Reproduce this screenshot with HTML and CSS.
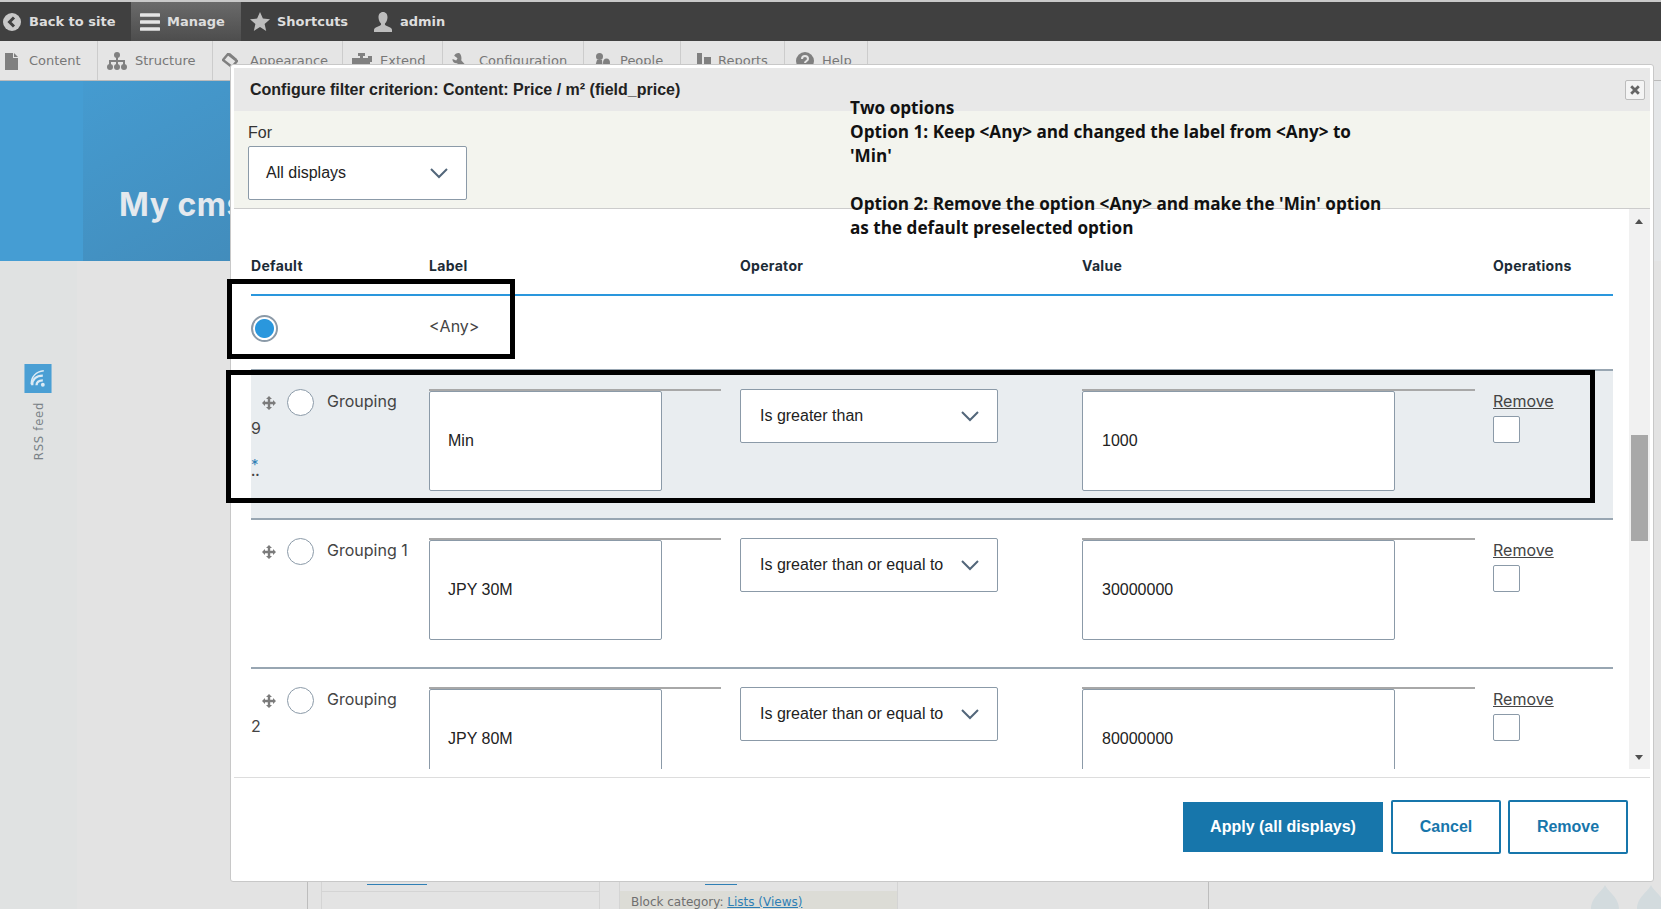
FILE: index.html
```
<!DOCTYPE html>
<html>

<head>
  <title>Configure filter criterion</title>
  <link rel="stylesheet" href="styles.css">
</head>

<body>

  <div class="toolbar">
    <a class="bar-item back-item">
      <svg class="bar-icon" viewBox="0 0 18 18"><circle cx="9" cy="9" r="9" fill="#c8c8c8"/><path d="M11 4.500 6.500 9l4.500 4.500" fill="none" stroke="#404040" stroke-width="3"/></svg>
      Back to site
    </a>
    <a class="bar-item manage-item">
      <svg class="bar-icon manage-icon" viewBox="0 0 20 20"><path d="M1 3h18M1 10h18M1 17h18" stroke="#e4e4e4" stroke-width="3.400" stroke-linecap="round"/></svg>
      Manage
    </a>
    <a class="bar-item shortcut-item">
      <svg class="bar-icon star-icon" viewBox="0 0 20 20"><path d="M10 0l2.900 6.600 7.100.7-5.400 4.700 1.600 7L10 15l-6.200 4 1.600-7L0 7.300l7.100-.7z" fill="#bdbdbd"/></svg>
      Shortcuts
    </a>
    <a class="bar-item admin-item">
      <svg class="bar-icon" viewBox="0 0 18 20"><path d="M9 0c3 0 4.500 2.300 4.500 5.200 0 2.600-1.100 4.800-2.300 6.100-.6.700-.3 1.700.6 2.100l4.400 2c1 .5 1.800 1.600 1.800 2.600v2H0v-2c0-1 .8-2.100 1.800-2.600l4.400-2c.9-.4 1.200-1.400.6-2.100C5.600 10 4.500 7.800 4.500 5.200 4.500 2.300 6 0 9 0z" fill="#bdbdbd"/></svg>
      admin
    </a>
  </div>

  <div class="tray">
    <a class="tray-item tray-content">
      <svg class="tray-icon" width="13" height="17" viewBox="0 0 13 17"><path d="M0 0h8v5h5v12H0zM9 0l4 4H9z" fill="#808080"/></svg>
      Content
    </a>
    <a class="tray-item tray-structure">
      <svg class="tray-icon" width="20" height="18" viewBox="0 0 20 18"><circle cx="10" cy="3" r="3" fill="#808080"/><circle cx="3" cy="15" r="3" fill="#808080"/><circle cx="10" cy="15" r="3" fill="#808080"/><circle cx="17" cy="15" r="3" fill="#808080"/><path d="M10 3v12M3 15v-6h14v6" fill="none" stroke="#808080" stroke-width="2"/></svg>
      Structure
    </a>
    <a class="tray-item tray-appearance">
      <svg class="tray-icon" width="16" height="17" viewBox="0 0 16 17"><path d="M6 1l9 7-5 6-9-7z" fill="none" stroke="#808080" stroke-width="2.400"/><path d="M5 1l9 7 1-2-7-6z" fill="#808080"/></svg>
      Appearance
    </a>
    <a class="tray-item tray-extend">
      <svg class="tray-icon" width="20" height="17" viewBox="0 0 20 17"><path d="M6 0h7v3h-2v2h5V3h4v6h-2v8H0V5h8V3H6z" fill="#808080"/></svg>
      Extend
    </a>
    <a class="tray-item tray-config">
      <svg class="tray-icon" width="17" height="17" viewBox="0 0 17 17"><path d="M6.500 0c-2 0-3.800 1.200-4.300 2.800l3.300 2.400-1.300 2.300L.6 5.900C0 8.300 2 10.500 5 10.200l7 6.300c1 .9 3.800-1.200 3-2.700L9.200 7.300c.8-3-.4-7.300-2.700-7.300z" fill="#808080"/></svg>
      Configuration
    </a>
    <a class="tray-item tray-people">
      <svg class="tray-icon" width="17" height="17" viewBox="0 0 17 17"><circle cx="6.500" cy="3.500" r="3.500" fill="#808080"/><path d="M4 7h5l1 10H1z" fill="#808080"/><ellipse cx="13.500" cy="10" rx="3.500" ry="4.500" fill="#808080"/></svg>
      People
    </a>
    <a class="tray-item tray-reports">
      <svg class="tray-icon" width="21" height="17" viewBox="0 0 21 17"><path d="M0 12h5v5H0zM7 0h5v17H7zM14 4h7v13h-7z" fill="#808080"/></svg>
      Reports
    </a>
    <a class="tray-item tray-help">
      <svg class="tray-icon" width="18" height="18" viewBox="0 0 18 18"><circle cx="9" cy="9" r="9" fill="#808080"/><path d="M6 7c0-4 6-4 6 0 0 2-3 2-3 4" fill="none" stroke="#e5e5e5" stroke-width="2"/><circle cx="9" cy="14" r="1.300" fill="#e5e5e5"/></svg>
      Help
    </a>
  </div>

  <div class="hero">
    <div class="hero-side"></div>
    <div class="hero-main">My cms</div>
    <div class="hero-tail"></div>
  </div>

  <div class="lower">
    <div class="side-strip">
      <svg class="rss-icon" viewBox="0 0 28 30"><rect width="28" height="30" fill="#4a9fd4"/><path d="M8 22c0-6 4-10 11-10M12.500 22c0-3 2-5 6.500-5" fill="none" stroke="#dcebf5" stroke-width="2.400"/><path d="M7 21c0-8 5-13 13-14" fill="none" stroke="#dcebf5" stroke-width="1.600"/><circle cx="19" cy="21.500" r="2" fill="#dcebf5"/></svg>
      <div class="rss-label">RSS feed</div>
    </div>
    <div class="lower-main">
      <div class="block-col block-left">
        <div class="peek-link peek-left"></div>
      </div>
      <div class="block-col block-right">
        <div class="peek-link peek-right"></div>
        <div class="block-meta">Block category: <a class="meta-link">Lists (Views)</a></div>
      </div>
    </div>
    <div class="lower-side">
      <svg class="drops" viewBox="0 0 70 24"><path d="M14 0c3 7 14 12 14 24H0C0 12 11 7 14 0zM60 0c3 7 14 12 14 24H46c0-12 11-17 14-24z" fill="#d3dbde"/></svg>
    </div>
  </div>

  <div class="dialog">
    <div class="dialog-title">
      <span>Configure filter criterion: Content: Price / m² (field_price)</span>
      <button class="btn-close">
        <svg width="10" height="10" viewBox="0 0 10 10"><path d="M1.200 1.200l7.600 7.600M8.800 1.200L1.200 8.800" stroke="#666" stroke-width="2.800"/></svg>
      </button>
    </div>

    <div class="filter-bar">
      <label class="for-label">For</label>
      <div class="select select-for">
        All displays
        <svg class="chevron" viewBox="0 0 18 11"><path d="M1 1l8 8 8-8" fill="none" stroke="#52667a" stroke-width="2"/></svg>
      </div>
    </div>

    <div class="dialog-body">
      <div class="table-area">
        <div class="grid-row head-row">
          <div>Default</div>
          <div>Label</div>
          <div class="head-op">Operator</div>
          <div>Value</div>
          <div>Operations</div>
        </div>

        <div class="grid-row any-row">
          <div><span class="radio radio-on"></span></div>
          <div class="any-label">&lt;Any&gt;</div>
        </div>

        <div class="grid-row item-row row-active">
          <div class="default-cell">
            <div class="drag-line">
              <svg class="move-icon" viewBox="0 0 14 14"><path d="M7 0l3 3H8.200v2.800H11V4l3 3-3 3V8.200H8.200V11H10l-3 3-3-3h1.800V8.200H3V10L0 7l3-3v1.800h2.800V3H4z" fill="#7b7b7b"/></svg>
              <span class="radio"></span>
              <span class="group-name">Grouping</span>
            </div>
            <div class="group-num">9</div>
            <div class="changed-mark">*</div>
            <div class="changed-dots">..</div>
          </div>
          <div class="field-cell"><div class="input label-input">Min</div></div>
          <div class="op-cell">
            <div class="select select-op">Is greater than
              <svg class="chevron" viewBox="0 0 18 11"><path d="M1 1l8 8 8-8" fill="none" stroke="#52667a" stroke-width="2"/></svg>
            </div>
          </div>
          <div class="field-cell value-cell"><div class="input value-input">1000</div></div>
          <div class="ops-cell"><a class="remove-link">Remove</a><span class="check"></span></div>
        </div>

        <div class="grid-row item-row">
          <div class="default-cell">
            <div class="drag-line">
              <svg class="move-icon" viewBox="0 0 14 14"><path d="M7 0l3 3H8.200v2.800H11V4l3 3-3 3V8.200H8.200V11H10l-3 3-3-3h1.800V8.200H3V10L0 7l3-3v1.800h2.800V3H4z" fill="#7b7b7b"/></svg>
              <span class="radio"></span>
              <span class="group-name">Grouping 1</span>
            </div>
          </div>
          <div class="field-cell"><div class="input label-input">JPY 30M</div></div>
          <div class="op-cell">
            <div class="select select-op">Is greater than or equal to
              <svg class="chevron" viewBox="0 0 18 11"><path d="M1 1l8 8 8-8" fill="none" stroke="#52667a" stroke-width="2"/></svg>
            </div>
          </div>
          <div class="field-cell value-cell"><div class="input value-input">30000000</div></div>
          <div class="ops-cell"><a class="remove-link">Remove</a><span class="check"></span></div>
        </div>

        <div class="grid-row item-row">
          <div class="default-cell">
            <div class="drag-line">
              <svg class="move-icon" viewBox="0 0 14 14"><path d="M7 0l3 3H8.200v2.800H11V4l3 3-3 3V8.200H8.200V11H10l-3 3-3-3h1.800V8.200H3V10L0 7l3-3v1.800h2.800V3H4z" fill="#7b7b7b"/></svg>
              <span class="radio"></span>
              <span class="group-name">Grouping</span>
            </div>
            <div class="group-num">2</div>
          </div>
          <div class="field-cell"><div class="input label-input">JPY 80M</div></div>
          <div class="op-cell">
            <div class="select select-op">Is greater than or equal to
              <svg class="chevron" viewBox="0 0 18 11"><path d="M1 1l8 8 8-8" fill="none" stroke="#52667a" stroke-width="2"/></svg>
            </div>
          </div>
          <div class="field-cell value-cell"><div class="input value-input">80000000</div></div>
          <div class="ops-cell"><a class="remove-link">Remove</a><span class="check"></span></div>
        </div>
      </div>

      <div class="scrollbar">
        <span class="arrow-up"></span>
        <span class="thumb"></span>
        <span class="arrow-down"></span>
      </div>
    </div>

    <div class="dialog-foot">
      <button class="btn btn-apply">Apply (all displays)</button>
      <button class="btn btn-cancel">Cancel</button>
      <button class="btn btn-remove">Remove</button>
    </div>

    <!-- annotation painted over the screenshot -->
    <div class="note">
      <p>Two options</p>
      <p>Option 1: Keep &lt;Any&gt; and changed the label from &lt;Any&gt; to</p>
      <p>'Min'</p>
      <p>&nbsp;</p>
      <p>Option 2: Remove the option &lt;Any&gt; and make the 'Min' option</p>
      <p>as the default preselected option</p>
    </div>
    <div class="mark mark-any"></div>
    <div class="mark mark-row"></div>
  </div>

</body>

</html>
```

FILE: styles.css
```
html, body {
  margin: 0;
  height: 909px;
  overflow: hidden;
}

body {
  position: relative;
  background-color: #e3e3e3;
  font-family: "Liberation Sans", Arial, sans-serif;
  font-size: 16px;
  color: #222;
}

/* top black bar */
.toolbar {
  display: flex;
  height: 39px;
  margin-top: 2px;
  background-color: #404040;
  box-shadow: 0 -2px 0 #c9c9c9;
  font-family: "DejaVu Sans", Verdana, sans-serif;
  font-size: 13px;
  font-weight: bold;
  color: #ddd;
}

.bar-item {
  display: flex;
  align-items: center;
  gap: 8px;
}

.bar-icon {
  width: 18px;
  height: 20px;
  flex: none;
}

.back-item {
  width: 131px;
  padding-left: 3px;
  box-sizing: border-box;
}

.manage-item {
  width: 110px;
  padding-left: 9px;
  box-sizing: border-box;
  background: linear-gradient(to bottom, #6a6a6a, #4d4d4d);
  gap: 7px;
}

.manage-icon {
  width: 20px;
}

.shortcut-item {
  padding-left: 9px;
  width: 133px;
  box-sizing: border-box;
  gap: 7px;
}

.star-icon {
  width: 20px;
}

/* second row */
.tray {
  display: flex;
  height: 39px;
  background-color: #e5e5e5;
  border-bottom: 1px solid #bbb;
  font-family: "DejaVu Sans", Verdana, sans-serif;
  font-size: 13px;
  color: #777;
}

.tray-item {
  display: flex;
  align-items: center;
  gap: 9px;
  box-sizing: border-box;
  border-right: 1px solid #ccc;
  padding-left: 9px;
}

.tray-icon {
  margin-top: 1px;
}

.tray-content { width: 98px; padding-left: 5px; gap: 11px; }
.tray-structure { width: 115px; gap: 8px; }
.tray-appearance { width: 130px; gap: 12px; }
.tray-extend { width: 100px; gap: 8px; }
.tray-config { width: 141px; gap: 10px; }
.tray-people { width: 97px; gap: 10px; }
.tray-reports { width: 104px; gap: 7px; }
.tray-help { width: 83px; gap: 8px; padding-left: 11px; }

.hero {
  display: flex;
  height: 180px;
}

.hero-side {
  width: 83px;
  background-color: #459dd3;
}

.hero-main {
  flex: 1;
  padding: 104px 0 0 36px;
  box-sizing: border-box;
  background: linear-gradient(150deg, #459bd0, #3f7ea8 50%, #4590be);
  font-family: Inter, sans-serif;
  font-size: 32px;
  line-height: 40px;
  font-weight: 700;
  letter-spacing: 0.5px;
  color: #e4e9ee;
}

.hero-tail {
  width: 60px;
  background-color: #e4e6e8;
}

.lower {
  display: flex;
  height: 648px;
}

.side-strip {
  display: flex;
  flex-direction: column;
  align-items: center;
  width: 77px;
  padding-top: 103px;
  box-sizing: border-box;
  background-color: #e0e2e2;
}

.rss-icon {
  display: block;
  width: 28px;
  height: 29px;
  margin-left: -1px;
}

.rss-label {
  margin-top: 9px;
  writing-mode: vertical-rl;
  transform: rotate(180deg);
  font-family: "DejaVu Sans", sans-serif;
  font-size: 11.5px;
  letter-spacing: 0.8px;
  color: #7b8288;
}

.lower-main {
  display: flex;
  gap: 19px;
  width: 902px;
  margin-left: 230px;
  padding: 0 0 0 13px;
  box-sizing: border-box;
  border-left: 1px solid #bdbdbd;
  border-right: 1px solid #bdbdbd;
}

.block-col {
  position: relative;
  width: 279px;
  height: 648px;
  box-sizing: border-box;
  border-right: 1px solid #d4d4d4;
  border-left: 1px solid #d4d4d4;
}

.block-left::after {
  content: "";
  position: absolute;
  top: 630px;
  left: 0;
  right: 0;
  border-top: 1px solid #d4d4d4;
}

.peek-link {
  position: absolute;
  top: 623px;
  height: 1px;
  background-color: #2f7fb5;
}

.peek-left { left: 45px; width: 60px; }
.peek-right { left: 85px; width: 32px; }

.block-meta {
  position: absolute;
  top: 630px;
  left: 0;
  right: 0;
  height: 18px;
  padding-left: 11px;
  background-color: #dcdcd6;
  font-family: "DejaVu Sans", sans-serif;
  font-size: 12px;
  line-height: 22px;
  color: #6f6f6f;
}

.meta-link {
  color: #2f7fb5;
  text-decoration: underline;
}

.lower-side {
  flex: 1;
  position: relative;
}

.drops {
  position: absolute;
  top: 624px;
  right: 0;
  width: 70px;
  height: 24px;
}

/* modal */
.dialog {
  position: absolute;
  top: 64px;
  left: 230px;
  width: 1424px;
  height: 818px;
  padding: 3px;
  box-sizing: border-box;
  display: flex;
  flex-direction: column;
  background-color: #fff;
  border: 1px solid #c8c8c8;
  border-radius: 3px;
}

.dialog-title {
  display: flex;
  justify-content: space-between;
  align-items: center;
  height: 43px;
  flex: none;
  padding: 0 5px 0 16px;
  box-sizing: border-box;
  background-color: #e8e8e8;
  font-weight: bold;
  font-size: 16px;
  color: #222;
}

.btn-close {
  display: flex;
  align-items: center;
  justify-content: center;
  width: 20px;
  height: 20px;
  padding: 0;
  background-color: #f4f4f4;
  border: 1px solid #bcbcbc;
  border-radius: 2px;
}

.filter-bar {
  height: 98px;
  flex: none;
  padding: 13px 0 0 14px;
  box-sizing: border-box;
  background-color: #f3f4ee;
  border-bottom: 1px solid #ccc;
}

.for-label {
  display: block;
  font-family: "Liberation Sans", sans-serif;
  line-height: 18px;
  margin-bottom: 4px;
  color: #333;
}

.select {
  display: flex;
  justify-content: space-between;
  align-items: center;
  height: 54px;
  padding: 0 18px 0 18px;
  box-sizing: border-box;
  background-color: #fff;
  border: 1px solid #8b9aa8;
  border-radius: 2px;
  color: #222;
}

.select-for {
  width: 219px;
  padding-left: 17px;
}

.chevron {
  width: 18px;
  height: 11px;
  flex: none;
}

.dialog-body {
  display: flex;
  height: 560px;
  flex: none;
  overflow: hidden;
}

.table-area {
  width: 1362px;
  margin-left: 17px;
  overflow: hidden;
}

.grid-row {
  display: grid;
  grid-template-columns: 178px 311px 342px 411px 120px;
}

.head-row {
  height: 87px;
  padding-top: 48px;
  box-sizing: border-box;
  border-bottom: 2px solid #2a97dd;
  font-family: Inter, sans-serif;
  font-size: 14px;
  line-height: 18px;
  font-weight: 700;
  letter-spacing: 0.3px;
  color: #1c2b36;
}

.any-row {
  height: 73px;
  box-sizing: border-box;
  padding-top: 19px;
}

.any-label {
  margin-top: 1px;
  font-family: Inter, sans-serif;
  line-height: 20px;
  color: #444;
}

.radio {
  display: block;
  width: 27px;
  height: 27px;
  box-sizing: border-box;
  background-color: #fff;
  border: 1px solid #8b9aa8;
  border-radius: 50%;
  flex: none;
}

.radio-on {
  border: 2px solid #8b9aa8;
  background: radial-gradient(circle, #2a97dd 9px, #fff 10px);
}

.item-row {
  height: 149px;
  padding-top: 18px;
  box-sizing: border-box;
  border-bottom: 2px solid #98a6b2;
}

.row-active {
  height: 151px;
  background-color: #e9edf0;
  border-top: 2px solid #98a6b2;
}

.default-cell {
  font-family: Inter, sans-serif;
  font-size: 16px;
  line-height: 27px;
  color: #444;
}

.drag-line {
  display: flex;
  align-items: center;
  height: 27px;
}

.move-icon {
  width: 14px;
  height: 14px;
  margin-left: 11px;
  margin-right: 11px;
  flex: none;
}

.group-name {
  margin-left: 13px;
  margin-top: -2px;
  white-space: nowrap;
}

.group-num {
  margin-top: -1px;
  line-height: 27px;
}

.changed-mark {
  margin-top: 18px;
  font-size: 15px;
  line-height: 10px;
  color: #2f7fb5;
}

.changed-dots {
  font-size: 13px;
  line-height: 2px;
  font-weight: bold;
  color: #444;
}

.field-cell {
  height: 102px;
  border-top: 2px solid #a8a8a8;
  width: 292px;
}

.value-cell {
  width: 393px;
}

.input {
  display: flex;
  align-items: center;
  height: 100px;
  padding-left: 18px;
  box-sizing: border-box;
  background-color: #fff;
  border: 1px solid #8b9aa8;
  border-radius: 2px;
  color: #222;
}

.label-input {
  width: 233px;
}

.value-input {
  width: 313px;
  padding-left: 19px;
}

.select-op {
  width: 258px;
  padding-left: 19px;
}

.ops-cell {
  font-family: Inter, sans-serif;
  line-height: 27px;
}

.remove-link {
  display: block;
  margin-top: -1px;
  margin-bottom: 1px;
  color: #444;
  text-decoration: underline;
}

.check {
  display: block;
  width: 27px;
  height: 27px;
  box-sizing: border-box;
  background-color: #fff;
  border: 1px solid #8b9aa8;
  border-radius: 2px;
}

.scrollbar {
  position: relative;
  width: 21px;
  margin-left: 16px;
  background-color: #f1f1f1;
}

.thumb {
  position: absolute;
  top: 226px;
  left: 2px;
  width: 17px;
  height: 106px;
  background-color: #a8a8a8;
}

.arrow-up,
.arrow-down {
  position: absolute;
  left: 6px;
  width: 0;
  height: 0;
  border-left: 4.500px solid transparent;
  border-right: 4.500px solid transparent;
}

.arrow-up {
  top: 10px;
  border-bottom: 5px solid #505050;
}

.arrow-down {
  bottom: 9px;
  border-top: 5px solid #505050;
}

.dialog-foot {
  display: flex;
  flex: 1;
  justify-content: flex-end;
  align-items: flex-start;
  gap: 8px;
  margin-top: 8px;
  padding: 22px 22px 0 0;
  border-top: 1px solid #ddd;
}

.btn {
  height: 54px;
  box-sizing: border-box;
  background-color: #fff;
  border: 2px solid #1776ab;
  border-radius: 2px;
  font-family: "Liberation Sans", Arial, sans-serif;
  font-size: 16px;
  font-weight: bold;
  color: #1776ab;
}

.btn-apply {
  width: 200px;
  height: 50px;
  margin-top: 2px;
  background-color: #1776ab;
  border: none;
  border-radius: 0;
  color: #fff;
}

.btn-cancel { width: 110px; }
.btn-remove { width: 120px; margin-left: -1px; }

.note {
  position: absolute;
  top: 31px;
  left: 619px;
  font-family: "Open Sans", sans-serif;
  font-size: 17.15px;
  line-height: 24px;
  font-weight: 700;
  color: #111;
}

.note p {
  margin: 0;
  white-space: nowrap;
}

.mark {
  position: absolute;
  box-sizing: border-box;
  border: 5px solid #000;
}

.mark-any {
  top: 214px;
  left: -4px;
  width: 288px;
  height: 80px;
}

.mark-row {
  top: 305px;
  left: -5px;
  width: 1369px;
  height: 133px;
}
```
